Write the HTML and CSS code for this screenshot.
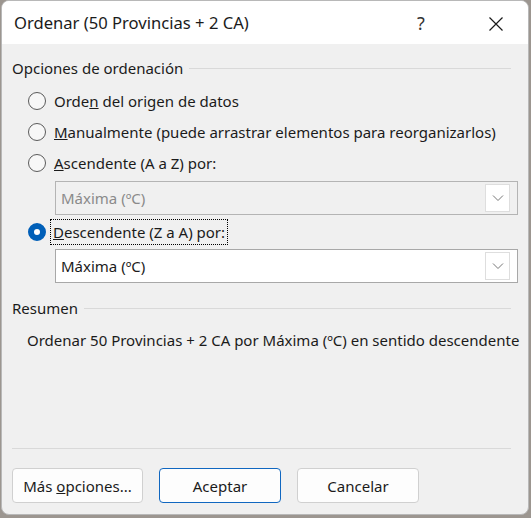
FILE: index.html
```html
<!DOCTYPE html>
<html lang="es">
  <head>
    <meta charset="UTF-8" />
    <title>Ordenar</title>
    <link rel="stylesheet" href="styles.css">
  </head>
  <body>
    <div class="dialog">
      <div class="titlebar">
        <span class="title">Ordenar (50 Provincias + 2 CA)</span>
        <span class="help">?</span>
        <span class="close">
          <svg width="16" height="16" viewBox="0 0 16 16"><path d="M1.5 1.5 L14.5 14.5 M14.5 1.5 L1.5 14.5" stroke="#1a1a1a" stroke-width="1.2" fill="none"/></svg>
        </span>
      </div>

      <div class="content">
        <div class="group-head"><span>Opciones de ordenación</span><i></i></div>

        <label class="radio-row"><span class="radio"></span><span>Orde<u>n</u> del origen de datos</span></label>
        <label class="radio-row"><span class="radio"></span><span><u>M</u>anualmente (puede arrastrar elementos para reorganizarlos)</span></label>
        <label class="radio-row"><span class="radio"></span><span><u>A</u>scendente (A a Z) por:</span></label>

        <div class="combo disabled">
          <span>Máxima (ºC)</span>
          <span class="drop"><svg width="12" height="8" viewBox="0 0 12 8"><path d="M1 1.5 L6 6.5 L11 1.5" stroke="#777" stroke-width="1" fill="none"/></svg></span>
        </div>

        <label class="radio-row tall"><span class="radio checked"></span><span class="focus"><u>D</u>escendente (Z a A) por:</span></label>

        <div class="combo">
          <span>Máxima (ºC)</span>
          <span class="drop"><svg width="12" height="8" viewBox="0 0 12 8"><path d="M1 1.5 L6 6.5 L11 1.5" stroke="#777" stroke-width="1" fill="none"/></svg></span>
        </div>

        <div class="group-head summary-head"><span>Resumen</span><i></i></div>
        <p class="summary">Ordenar 50 Provincias + 2 CA por Máxima (ºC) en sentido descendente</p>

        <hr class="sep" />

        <div class="buttons">
          <button class="btn wide">Más <u>o</u>pciones...</button>
          <button class="btn default">Aceptar</button>
          <button class="btn">Cancelar</button>
        </div>
      </div>
    </div>
  </body>
</html>
```

FILE: styles.css
```css
html,
body {
  margin: 0;
  height: 100%;
}

body {
  background-color: #9c9690;
  font-family: "Noto Sans", "Open Sans", sans-serif;
  font-size: 15px;
  color: #1b1b1b;
}

.dialog {
  margin: 0 2px 0 1px;
  height: 515px;
  background-color: #f0f0f0;
  border: 1px solid #b8b8b8;
  border-radius: 8px;
  overflow: hidden;
  box-sizing: border-box;
  display: flex;
  flex-direction: column;
}

/* title bar */
.titlebar {
  flex-shrink: 0;
  height: 43px;
  background-color: #fff;
  display: flex;
  align-items: center;
  padding-left: 12px;
}
.title {
  font-size: 16.6px;
  flex: 1;
}
.help {
  font-size: 18px;
  color: #333;
  width: 71px;
}
.close {
  width: 40px;
  display: flex;
  padding-top: 2px;
}

.content {
  padding: 0 10px 0 10px;
  display: flex;
  flex-direction: column;
}

/* section headings with rule */
.group-head {
  height: 24px;
  margin-top: 12px;
  display: flex;
  align-items: center;
  gap: 6px;
  padding-right: 7px;
}
.group-head i {
  flex: 1;
  height: 1px;
  background-color: #d9d9d9;
}

.radio-row {
  height: 31px;
  display: flex;
  align-items: center;
  gap: 8px;
  padding-left: 16px;
  white-space: nowrap;
}
.radio-row:first-of-type {
  margin-top: 5px;
}
.radio-row.tall {
  height: 34px;
}
.radio {
  flex-shrink: 0;
  width: 18px;
  height: 18px;
  border: 1px solid #5a5a5a;
  border-radius: 50%;
  background-color: #f7f7f7;
  box-sizing: border-box;
}
.radio.checked {
  border: 6px solid #005fb8;
  background-color: #fff;
}
.focus {
  outline: 1px dotted #000;
  outline-offset: 2px;
  margin-left: -1px;
}

/* combo boxes */
.combo {
  margin-left: 43px;
  height: 34px;
  border: 1px solid #a8a8a8;
  background-color: #fff;
  box-sizing: border-box;
  display: flex;
  align-items: center;
  justify-content: space-between;
  padding: 2px 7px 2px 5px;
}
.combo.disabled {
  margin-top: 3px;
  background-color: #f0f0f0;
  color: #8a8a8a;
  border-color: #b4b4b4;
}
.combo .drop {
  width: 25px;
  height: 28px;
  background-color: #fff;
  border: 1px solid #dedede;
  box-sizing: border-box;
  display: flex;
  align-items: center;
  justify-content: center;
}

.summary-head {
  margin-top: 13px;
}
.summary {
  margin: 10px 0 0 15px;
  line-height: 20px;
  white-space: nowrap;
}

.sep {
  margin: 98px 7px 0 0;
  border: 0;
  height: 1px;
  background-color: #d9d9d9;
}

.buttons {
  margin-top: 19px;
  display: flex;
  gap: 16px;
}
.btn {
  font-family: inherit;
  font-size: 15px;
  color: #1b1b1b;
  width: 122px;
  height: 35px;
  background-color: #fdfdfd;
  border: 1px solid #d0d0d0;
  border-radius: 4px;
}
.btn.wide {
  width: 131px;
}
.btn.default {
  border-color: #1067c0;
}
```
